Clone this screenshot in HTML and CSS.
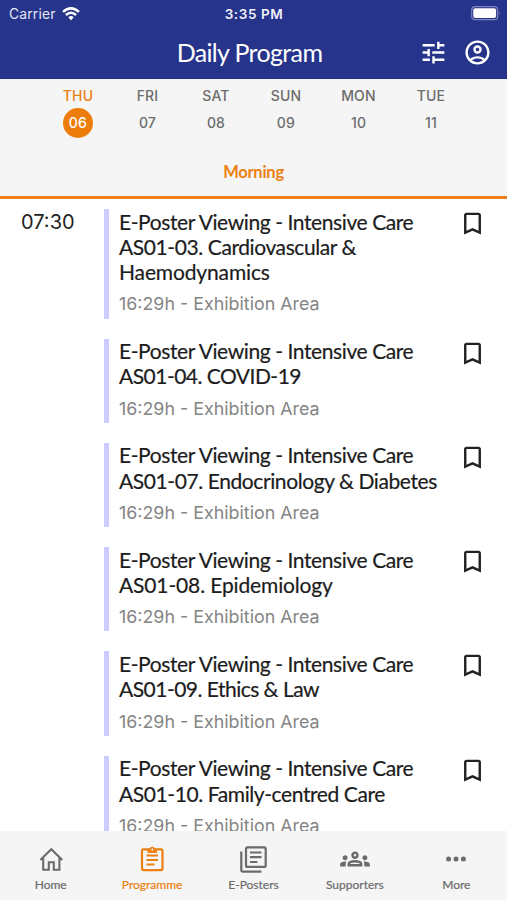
FILE: index.html
```
<!DOCTYPE html>
<html lang="en">
<head>
<meta charset="utf-8">
<title>Daily Program</title>
<link rel="stylesheet" href="styles.css">
</head>
<body>
<svg width="0" height="0" class="defs">
  <symbol id="bookmark" viewBox="0 0 24 24"><path d="M17 3H7c-1.100 0-2 .9-2 2v16l7-3 7 3V5c0-1.100-.9-2-2-2zm0 15-5-2.180L7 18V5h10v13z"/></symbol>
</svg>
<div class="app">
  <header class="header">
    <div class="status">
      <div class="carrier"><span>Carrier</span>
        <svg class="wifi" viewBox="0 0 18 14" fill="none" stroke="#fff" stroke-width="2.500"><path d="M1 4.900Q9-2.200 17 4.900M3.900 8Q9 3.600 14.100 8"/><path d="M6.300 10.200Q9 7.900 11.700 10.200L9 13.200z" fill="#fff" stroke="none"/></svg>
      </div>
      <div class="clock">3:35 PM</div>
      <svg class="battery" viewBox="0 0 30 15"><rect x=".7" y=".7" width="26" height="13" rx="3.500" fill="none" stroke="#7d84be" stroke-width="1.200"/><rect x="2.300" y="2.300" width="22.800" height="9.800" rx="2" fill="#fff"/><path d="M28 5v4.500q1.700-2.200 0-4.500" fill="#7d84be"/></svg>
    </div>
    <div class="bar">
      <h1>Daily Program</h1>
      <div class="actions">
        <svg viewBox="0 0 24 24"><path d="M3 17v2h6v-2H3zM3 5v2h10V5H3zm10 16v-2h8v-2h-8v-2h-2v6h2zM7 9v2H3v2h4v2h2V9H7zm14 4v-2H11v2h10zm-6-4h2V7h4V5h-4V3h-2v6z"/></svg>
        <svg viewBox="0 0 24 24"><path d="M12 2C6.480 2 2 6.480 2 12s4.480 10 10 10 10-4.480 10-10S17.520 2 12 2zM7.350 18.500C8.660 17.560 10.260 17 12 17s3.340.56 4.650 1.500C15.340 19.440 13.740 20 12 20s-3.340-.56-4.650-1.500zm10.790-1.380C16.450 15.800 14.320 15 12 15s-4.450.8-6.140 2.120C4.700 15.730 4 13.950 4 12c0-4.420 3.580-8 8-8s8 3.580 8 8c0 1.950-.7 3.730-1.860 5.120z"/><path d="M12 6c-1.930 0-3.500 1.570-3.500 3.500S10.070 13 12 13s3.500-1.570 3.500-3.500S13.930 6 12 6zm0 5c-.83 0-1.500-.67-1.500-1.500S11.170 8 12 8s1.500.67 1.500 1.500S12.830 11 12 11z"/></svg>
      </div>
    </div>
  </header>
  <section class="dates">
    <div class="days">
      <div class="day active"><span>THU</span><b>06</b></div>
      <div class="day"><span>FRI</span><b>07</b></div>
      <div class="day"><span>SAT</span><b>08</b></div>
      <div class="day"><span>SUN</span><b>09</b></div>
      <div class="day"><span>MON</span><b>10</b></div>
      <div class="day"><span>TUE</span><b>11</b></div>
    </div>
    <div class="period"><span>Morning</span></div>
  </section>
  <main class="schedule">
    <time>07:30</time>
    <div class="sessions">
      <article><div class="text"><h2><span>E-Poster Viewing - Intensive Care</span><span>AS01-03. Cardiovascular &amp;</span><span class="loose">Haemodynamics</span></h2><p>16:29h - Exhibition Area</p></div><svg class="mark"><use href="#bookmark"/></svg></article>
      <article><div class="text"><h2><span>E-Poster Viewing - Intensive Care</span><span class="tight">AS01-04. COVID-19</span></h2><p>16:29h - Exhibition Area</p></div><svg class="mark"><use href="#bookmark"/></svg></article>
      <article><div class="text"><h2><span>E-Poster Viewing - Intensive Care</span><span>AS01-07. Endocrinology &amp; Diabetes</span></h2><p>16:29h - Exhibition Area</p></div><svg class="mark"><use href="#bookmark"/></svg></article>
      <article><div class="text"><h2><span>E-Poster Viewing - Intensive Care</span><span class="loose">AS01-08. Epidemiology</span></h2><p>16:29h - Exhibition Area</p></div><svg class="mark"><use href="#bookmark"/></svg></article>
      <article><div class="text"><h2><span>E-Poster Viewing - Intensive Care</span><span class="tight">AS01-09. Ethics &amp; Law</span></h2><p>16:29h - Exhibition Area</p></div><svg class="mark"><use href="#bookmark"/></svg></article>
      <article><div class="text"><h2><span>E-Poster Viewing - Intensive Care</span><span>AS01-10. Family-centred Care</span></h2><p>16:29h - Exhibition Area</p></div><svg class="mark"><use href="#bookmark"/></svg></article>
    </div>
  </main>
  <nav class="tabs">
    <a><svg viewBox="0 0 28 28" fill="none" stroke="currentColor" stroke-width="2.100"><path d="M3.300 15 14.300 4.200 25.300 15M6.200 12.500V24.800H11.800V17.300H16.800V24.800H22.400V12.500"/></svg><span>Home</span></a>
    <a class="active"><svg viewBox="0 0 28 28" fill="none" stroke="currentColor" stroke-width="2.200"><rect x="4" y="4.300" width="20.500" height="20.800" rx="1.500"/><path d="M8.500 10.500H20M8.500 15H20M8.500 19.500H16.500"/><path d="M9.500 4H11.500C11.900 1 16.700 1 17.100 4H19V8H9.500z" fill="currentColor" stroke="none"/><circle cx="14.300" cy="4.500" r="1" fill="#f5f5f5" stroke="none"/></svg><span>Programme</span></a>
    <a><svg viewBox="0 0 28 28" fill="none" stroke="currentColor" stroke-width="2.200"><rect x="7" y="2.400" width="19.700" height="19.500" rx="1.500"/><path d="M2.300 6.500V25Q2.300 26.700 4 26.700H22.500M11 7.500H22.500M11 12.200H22.500M11 17H18.500"/></svg><span>E-Posters</span></a>
    <a><svg class="groups" viewBox="0.700 0.700 22.600 22.600" fill="currentColor"><path d="M4 13c1.100 0 2-.9 2-2s-.9-2-2-2-2 .9-2 2 .9 2 2 2zm1.130 1.100C4.760 14.040 4.390 14 4 14c-.99 0-1.930.21-2.780.58C.48 14.900 0 15.620 0 16.430V18h4.500v-1.610c0-.83.23-1.610.63-2.290zM20 13c1.100 0 2-.9 2-2s-.9-2-2-2-2 .9-2 2 .9 2 2 2zm4 3.430c0-.81-.48-1.530-1.220-1.850C21.930 14.210 20.990 14 20 14c-.39 0-.76.04-1.130.1.400.68.63 1.460.63 2.290V18H24v-1.570zM16.240 13.650C15.070 13.130 13.630 12.750 12 12.750s-3.070.39-4.240.9C6.680 14.130 6 15.210 6 16.390V18h12v-1.610c0-1.180-.68-2.260-1.760-2.740zM8.070 16c.09-.23.130-.39.910-.69.970-.38 1.990-.56 3.020-.56s2.050.18 3.020.56c.77.3.81.46.91.69H8.070zM12 8c.55 0 1 .45 1 1s-.45 1-1 1-1-.45-1-1 .45-1 1-1m0-2c-1.660 0-3 1.340-3 3s1.340 3 3 3 3-1.340 3-3-1.340-3-3-3z"/></svg><span>Supporters</span></a>
    <a><svg viewBox="0 0 28 28" fill="currentColor"><circle cx="6.600" cy="14" r="2.500"/><circle cx="14" cy="14" r="2.500"/><circle cx="21.400" cy="14" r="2.500"/></svg><span>More</span></a>
  </nav>
</div>
</body>
</html>
```
FILE: styles.css
```
* { box-sizing: border-box; }
body { margin: 0; font-family: Inter, sans-serif; color: #222; background: #fff; }
.defs { display: none; }
.app { width: 507px; height: 900px; display: flex; flex-direction: column; overflow: hidden; }
.header { height: 79px; flex: none; background: #27348b; color: #fff; border-bottom: 1px solid #202c80; }
.status { height: 27px; display: grid; grid-template-columns: 1fr auto 1fr; align-items: center; padding: 0 6px 0 9px; font-size: 13.800px; }
.carrier { display: flex; align-items: center; gap: 6px; letter-spacing: .2px; color: #e4e6f5; }
.wifi { width: 18px; height: 14px; }
.clock { font-weight: 600; font-size: 13.500px; letter-spacing: .6px; padding-right: 2px; color: #f0f1fa; }
.battery { width: 30px; height: 15px; justify-self: end; }
.bar { height: 51px; display: grid; grid-template-columns: 1fr auto 1fr; align-items: center; padding: 0 15px; }
h1 { grid-column: 2; margin: 0 8px 1px 0; font: 400 25px/32px Lato, sans-serif; letter-spacing: -.65px; }
.actions { display: flex; gap: 15px; justify-self: end; }
.actions svg { width: 29px; height: 29px; fill: #fff; }
.dates { height: 120px; flex: none; background: #f5f5f5; border-bottom: 3px solid #ec7f17; }
.days { display: grid; grid-template-columns: 70px 69px 68px 72px 73px 72px; padding: 8px 0 0 43px; }
.day { display: flex; flex-direction: column; align-items: center; color: #6c6c6c; font-size: 14px; line-height: 18px; letter-spacing: .2px; }
.day span { font-weight: 500; }
.day b { width: 30px; height: 30px; margin-top: 3px; border-radius: 50%; font-weight: 500; line-height: 30px; text-align: center; }
.day.active { color: #ec8013; }
.day.active b { background: #ec7d0b; color: #fff; }
.period { margin-top: 22px; text-align: center; font: 700 16.500px/24px Lato, sans-serif; letter-spacing: -.25px; color: #ec8013; }
.schedule { flex: 1; min-height: 0; overflow: hidden; display: grid; grid-template-columns: 104px 1fr; padding-top: 10px; }
time { padding-left: 21px; font-size: 20px; line-height: 26px; }
.sessions { display: flex; flex-direction: column; gap: 20px; }
article { flex: none; display: flex; justify-content: space-between; border-left: 5px solid #ccccff; padding: 0 20px 0 10px; }
h2 { margin: 0; font: 400 21px/25.300px Lato, sans-serif; letter-spacing: -.41px; color: #1c1c1c; white-space: nowrap; -webkit-text-stroke: .2px; position: relative; top: -.5px; }
h2 span { display: block; width: max-content; }
h2 .tight { letter-spacing: -.52px; }
h2 .loose { letter-spacing: -.14px; }
p { margin: 5.500px 0 1px; font-size: 17.850px; line-height: 27.200px; color: #858585; }
.mark { width: 29px; height: 29px; flex: none; fill: #222; }
.tabs { height: 69px; flex: none; display: grid; grid-template-columns: repeat(5, 1fr); background: #f5f5f5; font: 400 12px/16px Lato, sans-serif; color: #6b6b6b; }
.tabs a { display: flex; flex-direction: column; align-items: center; padding-top: 14px; }
.tabs svg { width: 28px; height: 28px; overflow: visible; }
.tabs span { margin-top: 4px; -webkit-text-stroke: .2px; }
.tabs .active { color: #ec8013; }
```
